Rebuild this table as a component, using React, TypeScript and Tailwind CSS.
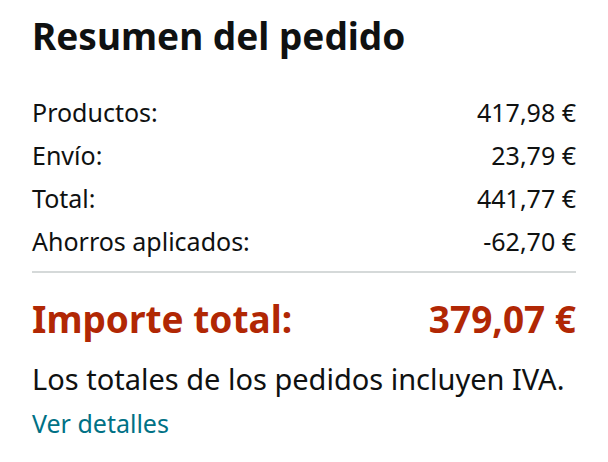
import React from 'react';

const rows = [
  { label: 'Productos:', value: '417,98 €' },
  { label: 'Envío:', value: '23,79 €' },
  { label: 'Total:', value: '441,77 €' },
  { label: 'Ahorros aplicados:', value: '-62,70 €' },
];

export default function App() {
  return (
    <div className="min-h-[462px] w-[608px] bg-white font-['Noto_Sans',sans-serif] text-[#0f1111]">
      <div className="px-[32px] pt-[16px]">
        <h1 className="text-[37px] font-bold leading-[40px]">Resumen del pedido</h1>
        <div className="mt-[35px] flex flex-col">
          {rows.map((row) => (
            <div key={row.label} className="flex justify-between text-[25px] leading-[43px]">
              <span>{row.label}</span>
              <span>{row.value}</span>
            </div>
          ))}
        </div>
        <div className="mt-[8px] h-[2px] bg-[#d5d9d9]" />
        <div className="mt-[24px] flex justify-between text-[37px] font-bold leading-[44px] text-[#b12704]">
          <span>Importe total:</span>
          <span>379,07 €</span>
        </div>
        <p className="mt-[20px] text-[29px] leading-[36px]">Los totales de los pedidos incluyen IVA.</p>
        <a href="#" className="mt-[10px] block text-[25px] leading-[32px] text-[#007185]">
          Ver detalles
        </a>
      </div>
    </div>
  );
}
